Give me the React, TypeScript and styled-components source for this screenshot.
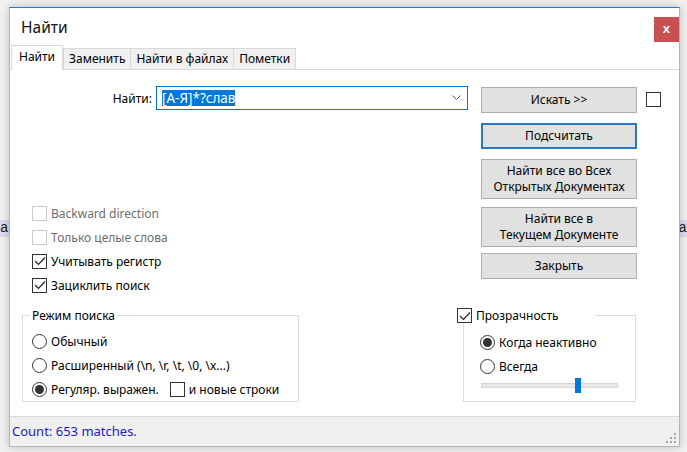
import React from 'react';
import styled, { createGlobalStyle } from 'styled-components';

const Global = createGlobalStyle`
  html, body { margin: 0; padding: 0; }
  body {
    width: 687px; height: 452px; overflow: hidden; background: #f3f3f3;
    font-family: "Noto Sans", "Open Sans", sans-serif; color: #000;
  }
  * { box-sizing: border-box; }
`;

const Page = styled.div`
  position: relative;
  width: 687px;
  height: 452px;
  overflow: hidden;
  background: #f1f1f1;
`;

const Editor = styled.div`
  display: flex;
  flex-direction: column;
  padding-top: 220px;
`;

const EditorLine = styled.div`
  display: flex;
  justify-content: space-between;
  font-family: "Liberation Mono", monospace;
  font-size: 14px;
  line-height: 17px;
`;

const Hl = styled.span`
  background: #dcdcf0;
  color: #222;
`;

const Win = styled.div`
  position: absolute;
  left: 9px;
  top: 7px;
  width: 671px;
  height: 440px;
  background: #fff;
  border: 1px solid #b4b4b4;
  border-top: 1px solid #1c7ad2;
  box-shadow: 0 0 9px rgba(0, 0, 0, 0.22);
  display: flex;
  flex-direction: column;
`;

const TitleBar = styled.div`
  height: 37px;
  display: flex;
  justify-content: space-between;
  align-items: flex-start;
  padding-left: 11px;
`;

const Title = styled.div`
  font-size: 15.5px;
  line-height: 39px;
  color: #111;
`;

const Close = styled.div`
  width: 25px;
  height: 25px;
  margin-top: 9px;
  background: #c75050;
  color: #fff;
  font-size: 13px;
  font-weight: 600;
  display: flex;
  align-items: center;
  justify-content: center;
  line-height: 1;
  padding-bottom: 2px;
`;

const TabRow = styled.div`
  height: 25px;
  display: flex;
  align-items: flex-end;
  padding-left: 1px;
  border-bottom: 1px solid #d9d9d9;
`;

const Tab = styled.div<{ $active?: boolean }>`
  position: relative;
  height: ${(p) => (p.$active ? 25 : 21)}px;
  margin-bottom: ${(p) => (p.$active ? -1 : 0)}px;
  padding: 0 ${(p) => (p.$active ? 7 : 5)}px;
  background: ${(p) => (p.$active ? '#fff' : '#f0f0f0')};
  border: 1px solid #d9d9d9;
  border-bottom: none;
  margin-right: ${(p) => (p.$active ? 0 : -1)}px;
  font-size: 12px;
  line-height: ${(p) => (p.$active ? 22 : 20)}px;
  z-index: ${(p) => (p.$active ? 1 : 0)};
`;

const Panel = styled.div`
  flex: 1;
  padding-top: 16px;
  display: flex;
  flex-direction: column;
`;

const TopRow = styled.div`
  display: flex;
  align-items: flex-start;
`;

const LeftCol = styled.div`
  width: 471px;
  display: flex;
  flex-direction: column;
`;

const FindRow = styled.div`
  display: flex;
  align-items: center;
  height: 24px;
`;

const FindLabel = styled.div`
  width: 146px;
  padding-right: 4px;
  text-align: right;
  font-size: 12px;
`;

const Combo = styled.div`
  width: 312px;
  height: 24px;
  border: 1px solid #0078d7;
  display: flex;
  align-items: center;
  justify-content: space-between;
  padding: 0 6px 0 5px;
`;

const Selected = styled.span`
  background: #0078d7;
  color: #fff;
  font-size: 13.5px;
  line-height: 16px;
`;

const Checks = styled.div`
  margin-top: 91px;
  padding-left: 22px;
  display: flex;
  flex-direction: column;
`;

const Row = styled.div<{ $h?: number }>`
  height: ${(p) => p.$h ?? 24}px;
  display: flex;
  align-items: center;
  font-size: 12px;
  white-space: nowrap;
`;

const Label = styled.span<{ $disabled?: boolean }>`
  margin-left: 4px;
  color: ${(p) => (p.$disabled ? '#6d6d6d' : '#000')};
`;

const Box = styled.span<{ $disabled?: boolean }>`
  width: 15px;
  height: 15px;
  flex: none;
  border: 1px solid ${(p) => (p.$disabled ? '#cacaca' : '#333')};
  background: #fff;
  display: flex;
  align-items: center;
  justify-content: center;
`;

const Radio = styled.span`
  width: 15px;
  height: 15px;
  flex: none;
  border: 1px solid #333;
  border-radius: 50%;
  background: #fff;
  display: flex;
  align-items: center;
  justify-content: center;
`;

const Dot = styled.span`
  width: 9px;
  height: 9px;
  border-radius: 50%;
  background: #333;
`;

const Buttons = styled.div`
  width: 156px;
  margin-top: 1px;
  display: flex;
  flex-direction: column;
`;

const Btn = styled.div<{ $h: number; $mt: number; $focus?: boolean }>`
  height: ${(p) => p.$h}px;
  margin-top: ${(p) => p.$mt}px;
  background: #e1e1e1;
  border: ${(p) => (p.$focus ? '2px solid #2b77c4' : '1px solid #adadad')};
  display: flex;
  align-items: center;
  justify-content: center;
  text-align: center;
  font-size: 12px;
  line-height: 16px;
`;

const SideBox = styled(Box)`
  margin-left: 9px;
  margin-top: 6px;
`;

const BottomRow = styled.div`
  display: flex;
  align-items: flex-start;
  margin-top: 10px;
`;

const Group = styled.fieldset<{ $ml: number; $w: number }>`
  margin: 0 0 0 ${(p) => p.$ml}px;
  width: ${(p) => p.$w}px;
  padding: 0;
  border: 1px solid #dcdcdc;
  min-width: 0;
`;

const Legend = styled.legend`
  margin-left: 7px;
  padding: 0 2px;
  font-size: 12px;
  line-height: 17px;
`;

const CheckLegend = styled.legend`
  margin-left: -7px;
  width: 138px;
  padding: 0;
  background: #fff;
  display: flex;
  align-items: center;
  height: 17px;
  font-size: 12px;
`;

const GroupBody = styled.div<{ $pl: number; $pt: number; $pb: number }>`
  padding: ${(p) => p.$pt}px 0 ${(p) => p.$pb}px ${(p) => p.$pl}px;
  display: flex;
  flex-direction: column;
`;

const InlineBox = styled(Box)`
  margin-left: 11px;
`;

const Slider = styled.div`
  position: relative;
  width: 137px;
  height: 15px;
  margin-left: 1px;
  display: flex;
  align-items: center;
`;

const Track = styled.div`
  width: 100%;
  height: 5px;
  background: #e7e7e7;
  border: 1px solid #d6d6d6;
`;

const Thumb = styled.div<{ $pos: number }>`
  position: absolute;
  top: 0;
  left: ${(p) => p.$pos}px;
  width: 6px;
  height: 15px;
  background: #0078d7;
`;

const Status = styled.div`
  height: 30px;
  background: #f0f0f0;
  border-top: 1px solid #dadada;
  display: flex;
  justify-content: space-between;
  align-items: flex-end;
  padding: 0 2px 2px 2px;
`;

const Count = styled.div`
  align-self: center;
  font-size: 13px;
  color: #1c1cc8;
`;

const Check = () => (
  <svg width="12" height="10" viewBox="0 0 12 10">
    <polyline points="1,5 4.5,8.5 11,1.5" fill="none" stroke="#222" strokeWidth="1.2" />
  </svg>
);

const CheckBox: React.FC<{ checked?: boolean; disabled?: boolean }> = ({ checked, disabled }) => (
  <Box $disabled={disabled}>{checked && <Check />}</Box>
);

const Chevron = () => (
  <svg width="9" height="6" viewBox="0 0 9 6">
    <polyline points="0.5,0.5 4.5,4.5 8.5,0.5" fill="none" stroke="#555" strokeWidth="1" />
  </svg>
);

const Grip = () => (
  <svg width="12" height="12" viewBox="0 0 12 12">
    {[
      [9, 1],
      [5, 5],
      [9, 5],
      [1, 9],
      [5, 9],
      [9, 9],
    ].map(([x, y], i) => (
      <rect key={i} x={x} y={y} width="2" height="2" fill="#a8a8a8" />
    ))}
  </svg>
);

export default function App() {
  return (
    <>
      <Global />
      <Page>
        <Editor>
          <EditorLine>
            <Hl>ан</Hl>
            <Hl>&nbsp;а</Hl>
          </EditorLine>
        </Editor>
        <Win>
          <TitleBar>
            <Title>Найти</Title>
            <Close>x</Close>
          </TitleBar>
          <TabRow>
            <Tab $active>Найти</Tab>
            <Tab>Заменить</Tab>
            <Tab>Найти в файлах</Tab>
            <Tab>Пометки</Tab>
          </TabRow>
          <Panel>
            <TopRow>
              <LeftCol>
                <FindRow>
                  <FindLabel>Найти:</FindLabel>
                  <Combo>
                    <Selected>[A-Я]*?слав</Selected>
                    <Chevron />
                  </Combo>
                </FindRow>
                <Checks>
                  <Row>
                    <CheckBox disabled />
                    <Label $disabled>Backward direction</Label>
                  </Row>
                  <Row>
                    <CheckBox disabled />
                    <Label $disabled>Только целые слова</Label>
                  </Row>
                  <Row>
                    <CheckBox checked />
                    <Label>Учитывать регистр</Label>
                  </Row>
                  <Row>
                    <CheckBox checked />
                    <Label>Зациклить поиск</Label>
                  </Row>
                </Checks>
              </LeftCol>
              <Buttons>
                <Btn $h={26} $mt={0}>Искать &gt;&gt;</Btn>
                <Btn $h={26} $mt={10} $focus>Подсчитать</Btn>
                <Btn $h={40} $mt={10}>
                  Найти все во Всех
                  <br />
                  Открытых Документах
                </Btn>
                <Btn $h={40} $mt={8}>
                  Найти все в
                  <br />
                  Текущем Документе
                </Btn>
                <Btn $h={26} $mt={6}>Закрыть</Btn>
              </Buttons>
              <SideBox />
            </TopRow>
            <BottomRow>
              <Group $ml={12} $w={277}>
                <Legend>Режим поиска</Legend>
                <GroupBody $pl={9} $pt={5} $pb={0}>
                  <Row>
                    <Radio />
                    <Label>Обычный</Label>
                  </Row>
                  <Row>
                    <Radio />
                    <Label>Расширенный (\n, \r, \t, \0, \x...)</Label>
                  </Row>
                  <Row>
                    <Radio>
                      <Dot />
                    </Radio>
                    <Label>Регуляр. выражен.</Label>
                    <InlineBox />
                    <Label>и новые строки</Label>
                  </Row>
                </GroupBody>
              </Group>
              <Group $ml={164} $w={173}>
                <CheckLegend>
                  <CheckBox checked />
                  <Label>Прозрачность</Label>
                </CheckLegend>
                <GroupBody $pl={16} $pt={6} $pb={8}>
                  <Row>
                    <Radio>
                      <Dot />
                    </Radio>
                    <Label>Когда неактивно</Label>
                  </Row>
                  <Row>
                    <Radio />
                    <Label>Всегда</Label>
                  </Row>
                  <Slider>
                    <Track />
                    <Thumb $pos={94} />
                  </Slider>
                </GroupBody>
              </Group>
            </BottomRow>
          </Panel>
          <Status>
            <Count>Count: 653 matches.</Count>
            <Grip />
          </Status>
        </Win>
      </Page>
    </>
  );
}
